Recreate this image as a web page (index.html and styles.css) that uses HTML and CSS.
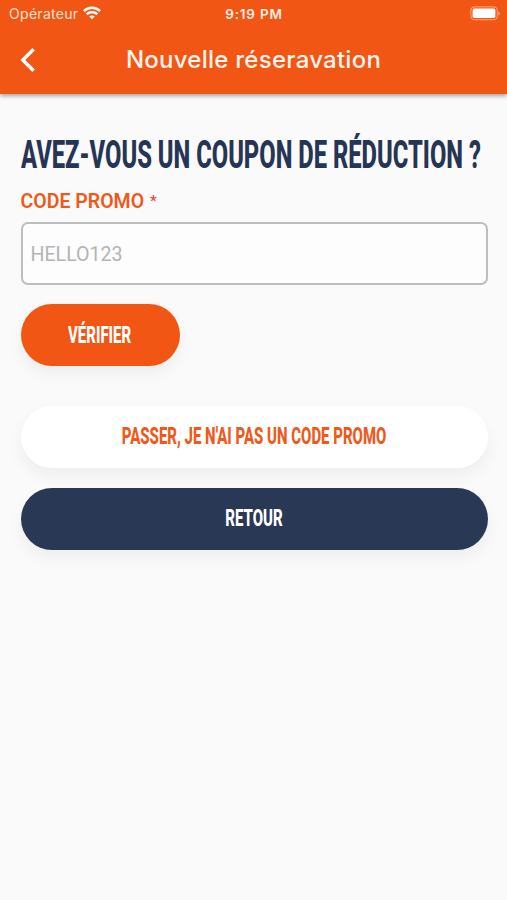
FILE: index.html
```html
<!DOCTYPE html>
<html lang="fr">

<head>
  <meta charset="UTF-8">
  <meta name="viewport" content="width=device-width, initial-scale=1.0">
  <title>Nouvelle réseravation</title>
  <link rel="stylesheet" href="styles.css">
</head>

<body>
  <header class="app-header">
    <div class="status-bar">
      <div class="carrier">
        <span>Opérateur</span>
        <svg class="wifi" viewBox="0 0 18 14" width="18" height="14" fill="none" stroke="#fff" stroke-width="2.5">
          <path d="M0.9 5.1C5.5 0.7 12.5 0.7 17.1 5.1" />
          <path d="M3.6 8.3C6.8 5.4 11.2 5.4 14.4 8.3" />
          <path d="M6.2 10.5C7.8 9 10.2 9 11.8 10.5L9 13.3Z" fill="#fff" stroke="none" />
        </svg>
      </div>
      <span class="time">9:19 PM</span>
      <svg class="battery" viewBox="0 0 31 15" width="31" height="15">
        <rect x="0.9" y="0.9" width="26.4" height="12.8" rx="3.6" fill="none" stroke="#fff" stroke-opacity="0.4" stroke-width="1.2" />
        <rect x="2.6" y="2.6" width="22.8" height="9.4" rx="1.8" fill="#fff" />
        <path d="M28.4 5.2C30.4 6 30.4 8.6 28.4 9.4Z" fill="#fff" fill-opacity="0.5" />
      </svg>
    </div>
    <nav class="nav-bar">
      <svg class="back" viewBox="0 0 16 24" width="16" height="24" fill="none" stroke="#fff" stroke-width="3.5">
        <path d="M13.6 1.2L2.8 12L13.6 22.8" />
      </svg>
      <h1>Nouvelle réseravation</h1>
    </nav>
  </header>

  <main>
    <h2><span>AVEZ-VOUS UN COUPON DE RÉDUCTION ?</span></h2>
    <label class="label" for="promo">CODE PROMO <span>*</span></label>
    <input class="field" id="promo" type="text" placeholder="HELLO123">
    <button class="btn btn-check"><span>VÉRIFIER</span></button>
    <button class="btn btn-skip"><span>PASSER, JE N'AI PAS UN CODE PROMO</span></button>
    <button class="btn btn-back"><span>RETOUR</span></button>
  </main>
</body>

</html>
```
FILE: styles.css
```css
* {
  margin: 0;
  padding: 0;
  box-sizing: border-box;
}

body {
  min-height: 100vh;
  background-color: #fafafa;
  font-family: "Roboto", sans-serif;
}

.app-header {
  height: 94px;
  background-color: #f25614;
  color: #fff;
  box-shadow: 0 2px 4px rgba(0, 0, 0, 0.35);
}

.status-bar {
  display: grid;
  grid-template-columns: 1fr auto 1fr;
  align-items: center;
  height: 27px;
  padding: 0 6px 0 9px;
  font-family: "Inter", sans-serif;
  font-size: 13.5px;
}

.carrier {
  display: flex;
  align-items: center;
  gap: 5px;
  color: #ffe0d0;
  font-size: 14px;
  letter-spacing: 0.3px;
}

.carrier .wifi {
  margin-top: -2px;
}

.time {
  padding-right: 2px;
  font-weight: 600;
  color: #fff0e6;
  letter-spacing: 0.8px;
}

.battery {
  justify-self: end;
}

.nav-bar {
  display: grid;
  grid-template-columns: 16px 1fr 16px;
  align-items: center;
  height: 65px;
  padding: 0 20px;
}

.nav-bar h1 {
  font-family: "Inter", sans-serif;
  font-size: 24px;
  font-weight: 500;
  color: #fff4ec;
  letter-spacing: 0.25px;
  text-align: center;
}

main {
  display: flex;
  flex-direction: column;
  align-items: stretch;
  padding: 38px 19.5px 0 20.5px;
}

/* narrow display lettering */
h2 span,
.btn span {
  display: inline-block;
  width: max-content;
  white-space: nowrap;
  font-weight: 800;
}

h2 {
  height: 48px;
  line-height: 46px;
  font-size: 38.5px;
  color: #263554;
  overflow: hidden;
}

h2 span {
  transform: scaleX(0.617);
  transform-origin: left;
}

.label {
  margin-top: 9px;
  height: 24px;
  line-height: 24px;
  font-size: 19.5px;
  font-weight: 600;
  color: #ee5a1c;
}

.label span {
  margin-left: 1px;
  font-size: 15px;
  font-weight: 500;
  color: #f4433c;
  vertical-align: 2px;
}

.field {
  height: 63px;
  margin-top: 9px;
  padding: 1px 8px 0;
  border: 2px solid #bebebe;
  border-radius: 7px;
  background-color: #fdfdfd;
  font-family: inherit;
  font-size: 19.6px;
}

.field::placeholder {
  color: #b4b4b4;
}

.btn {
  height: 62px;
  padding-bottom: 1px;
  border: none;
  border-radius: 31px;
  font-family: inherit;
  font-size: 24px;
  color: #fff;
  box-shadow: 0 8px 16px rgba(0, 0, 0, 0.05);
}

.btn span {
  transform: scaleX(0.624);
}

.btn-check {
  align-self: flex-start;
  width: 159px;
  margin-top: 19px;
  background-color: #f25614;
}

.btn-skip {
  margin-top: 39.5px;
  background-color: #fff;
  color: #ee5a1c;
}

.btn-back {
  margin-top: 20px;
  background-color: #293855;
}
```
